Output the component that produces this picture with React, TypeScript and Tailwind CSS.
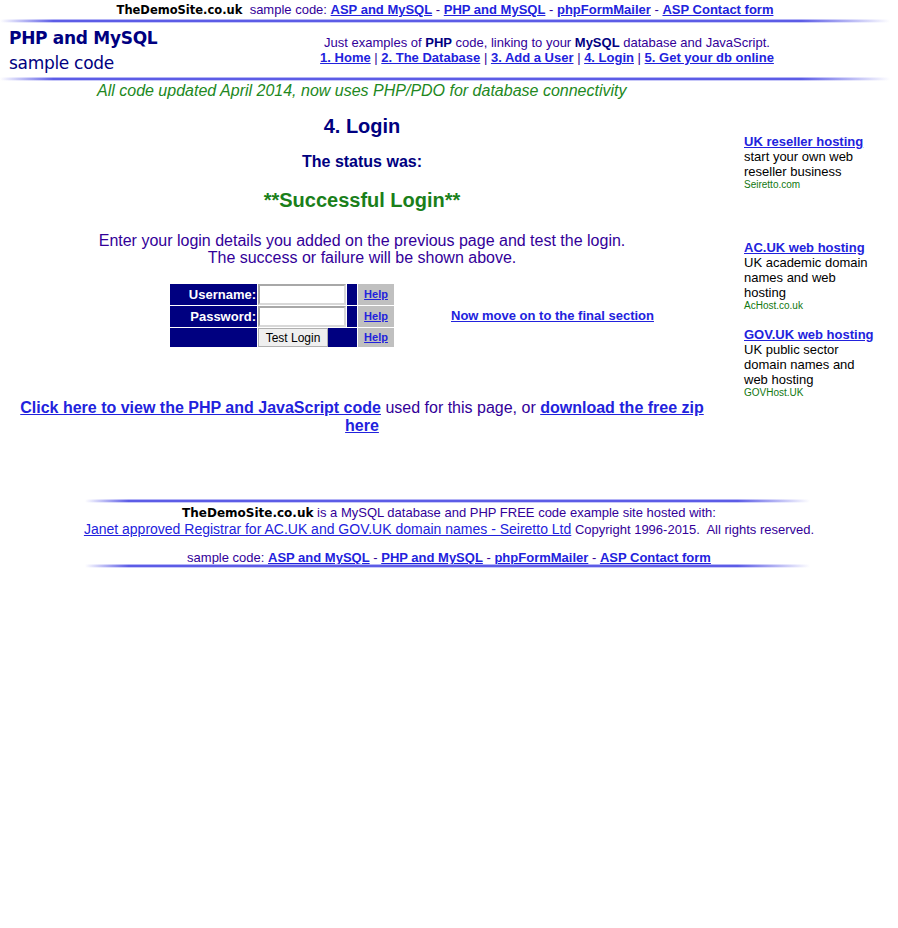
const comic = "font-['Comic_Sans_MS','DejaVu_Sans',sans-serif]";
const link = "text-[#2222dd] underline font-bold";

function Rule({ className = "" }: { className?: string }) {
  return (
    <div className={`flex flex-col ${className}`}>
      <div className="h-px bg-[linear-gradient(to_right,transparent,#b4b4f6_6%,#b4b4f6_90%,transparent)]" />
      <div className="h-[2px] bg-[linear-gradient(to_right,transparent,#5c5ce6_6%,#5c5ce6_90%,transparent)]" />
      <div className="h-px bg-[linear-gradient(to_right,transparent,#c8c8f8_6%,#c8c8f8_90%,transparent)]" />
    </div>
  );
}

function SampleLinks() {
  return (
    <>
      <a className="text-[#2222dd] underline font-bold">ASP and MySQL</a> -{" "}
      <a className="text-[#2222dd] underline font-bold">PHP and MySQL</a> -{" "}
      <a className="text-[#2222dd] underline font-bold">phpFormMailer</a> -{" "}
      <a className="text-[#2222dd] underline font-bold">ASP Contact form</a>
    </>
  );
}

function Ad({ title, lines, host }: { title: string; lines: string; host: string }) {
  return (
    <div className="text-[13px] leading-[15px]">
      <a className={link}>{title}</a>
      <div className="text-black">{lines}</div>
      <div className="text-[10px] leading-[12px] text-[#117711]">{host}</div>
    </div>
  );
}

function FormRow({ label }: { label: string }) {
  return (
    <div className="flex h-[21px] gap-px">
      <div className="w-[87px] bg-[#000080] text-white font-bold pr-px flex items-center justify-end">{label}</div>
      <div className="w-[88px] bg-[#000080] flex items-center">
        <div className="w-[88px] h-[21px] bg-white border-2 border-[#a8a8a8] border-r-[#d8d8d8] border-b-[#d8d8d8]" />
      </div>
      <div className="w-[10px] bg-[#000080]" />
      <div className="flex-1 bg-[#c0c0c0] flex items-center justify-center text-[11px]">
        <a className={link}>Help</a>
      </div>
    </div>
  );
}

export default function App() {
  return (
    <div className="w-[898px] min-h-[928px] bg-white font-['Liberation_Sans',Arial,sans-serif] text-[#330099]">
      {/* top strip */}
      <div className="w-[890px] pt-[2px] h-[19px] text-center text-[13px] leading-[15px]">
        <span className={`${comic} font-bold text-black text-[11.5px]`}>TheDemoSite.co.uk</span>
        &nbsp; sample code: <SampleLinks />
      </div>
      <Rule className="w-[890px]" />

      {/* header */}
      <div className="flex h-[54px]">
        <div className={`w-[196px] pl-[9px] pt-[3px] ${comic} text-[#000080]`}>
          <div className="text-[17px] leading-[24px] font-bold tracking-[-0.3px]">PHP and MySQL</div>
          <div className="text-[17px] leading-[26px] tracking-[-0.3px]">sample code</div>
        </div>
        <div className="flex-1 pt-[12px] text-center text-[13px] leading-[15px]">
          <div>
            Just examples of <b className="text-[#000080]">PHP</b> code, linking to your{" "}
            <b className="text-[#000080]">MySQL</b> database and JavaScript.
          </div>
          <div>
            <a className={link}>1. Home</a> | <a className={link}>2. The Database</a> |{" "}
            <a className={link}>3. Add a User</a> | <a className={link}>4. Login</a> |{" "}
            <a className={link}>5. Get your db online</a>
          </div>
        </div>
      </div>
      <Rule className="w-[890px]" />

      <div className="pl-[97px] pt-px text-[16px] leading-[18px] italic text-[#228822]">
        All code updated April 2014, now uses PHP/PDO for database connectivity
      </div>

      {/* body */}
      <div className="flex">
        <div className="w-[724px] text-center">
          <h2 className="mt-[15px] text-[20px] leading-[22px] font-bold text-[#000080]">4. Login</h2>
          <div className="mt-[16px] text-[16px] leading-[18px] font-bold text-[#000080]">The status was:</div>
          <div className="mt-[18px] text-[20px] leading-[22px] font-bold text-[#1a7f1a]">**Successful Login**</div>
          <div className="mt-[21px] text-[16px] leading-[17px]">
            Enter your login details you added on the previous page and test the login.
            <br />
            The success or failure will be shown above.
          </div>

          <div className="mt-[18px] flex items-center pl-[170px] gap-[57px]">
            <div className="w-[224px] flex flex-col gap-px text-[13px] leading-[15px]">
              <FormRow label="Username:" />
              <FormRow label="Password:" />
              <div className="flex h-[19px] gap-px">
                <div className="w-[87px] bg-[#000080]" />
                <div className="w-[99px] bg-[#000080] flex">
                  <button className="w-[70px] h-[19px] bg-[#efefef] border border-[#b0b0b0] text-black text-[12px] leading-[14px] font-['Liberation_Sans',Arial,sans-serif]">
                    Test Login
                  </button>
                </div>
                <div className="flex-1 bg-[#c0c0c0] flex items-center justify-center text-[11px]">
                  <a className={link}>Help</a>
                </div>
              </div>
            </div>
            <a className={`${link} text-[13px] leading-[15px]`}>Now move on to the final section</a>
          </div>

          <div className="mx-auto mt-[52px] w-[700px] text-[16px] leading-[18px]">
            <a className={link}>Click here to view the PHP and JavaScript code</a> used for this page, or{" "}
            <a className={link}>download the free zip here</a>
          </div>
        </div>

        <div className="ml-[20px] w-[134px] pt-[34px] flex flex-col">
          <Ad title="UK reseller hosting" lines="start your own web reseller business" host="Seiretto.com" />
          <div className="h-[49px]" />
          <Ad title="AC.UK web hosting" lines="UK academic domain names and web hosting" host="AcHost.co.uk" />
          <div className="h-[15px]" />
          <Ad title="GOV.UK web hosting" lines="UK public sector domain names and web hosting" host="GOVHost.UK" />
        </div>
      </div>

      {/* footer */}
      <div className="mt-[64px] w-[898px]">
        <Rule className="w-[725px] ml-[85px]" />
        <div className="pt-[2px] text-center text-[13px] leading-[16px] whitespace-nowrap">
          <span className={`${comic} font-bold text-black text-[12px]`}>TheDemoSite.co.uk</span> is a MySQL database and PHP FREE code example site hosted with:
          <br />
          <a className="text-[#2222dd] underline text-[14px] leading-[16px]">Janet approved Registrar for AC.UK and GOV.UK domain names - Seiretto Ltd</a> Copyright 1996-2015.&nbsp; All rights reserved.
          <div className="h-[12px]" />
          sample code: <SampleLinks />
        </div>
        <Rule className="w-[725px] ml-[85px] -mt-[2px]" />
      </div>
    </div>
  );
}
